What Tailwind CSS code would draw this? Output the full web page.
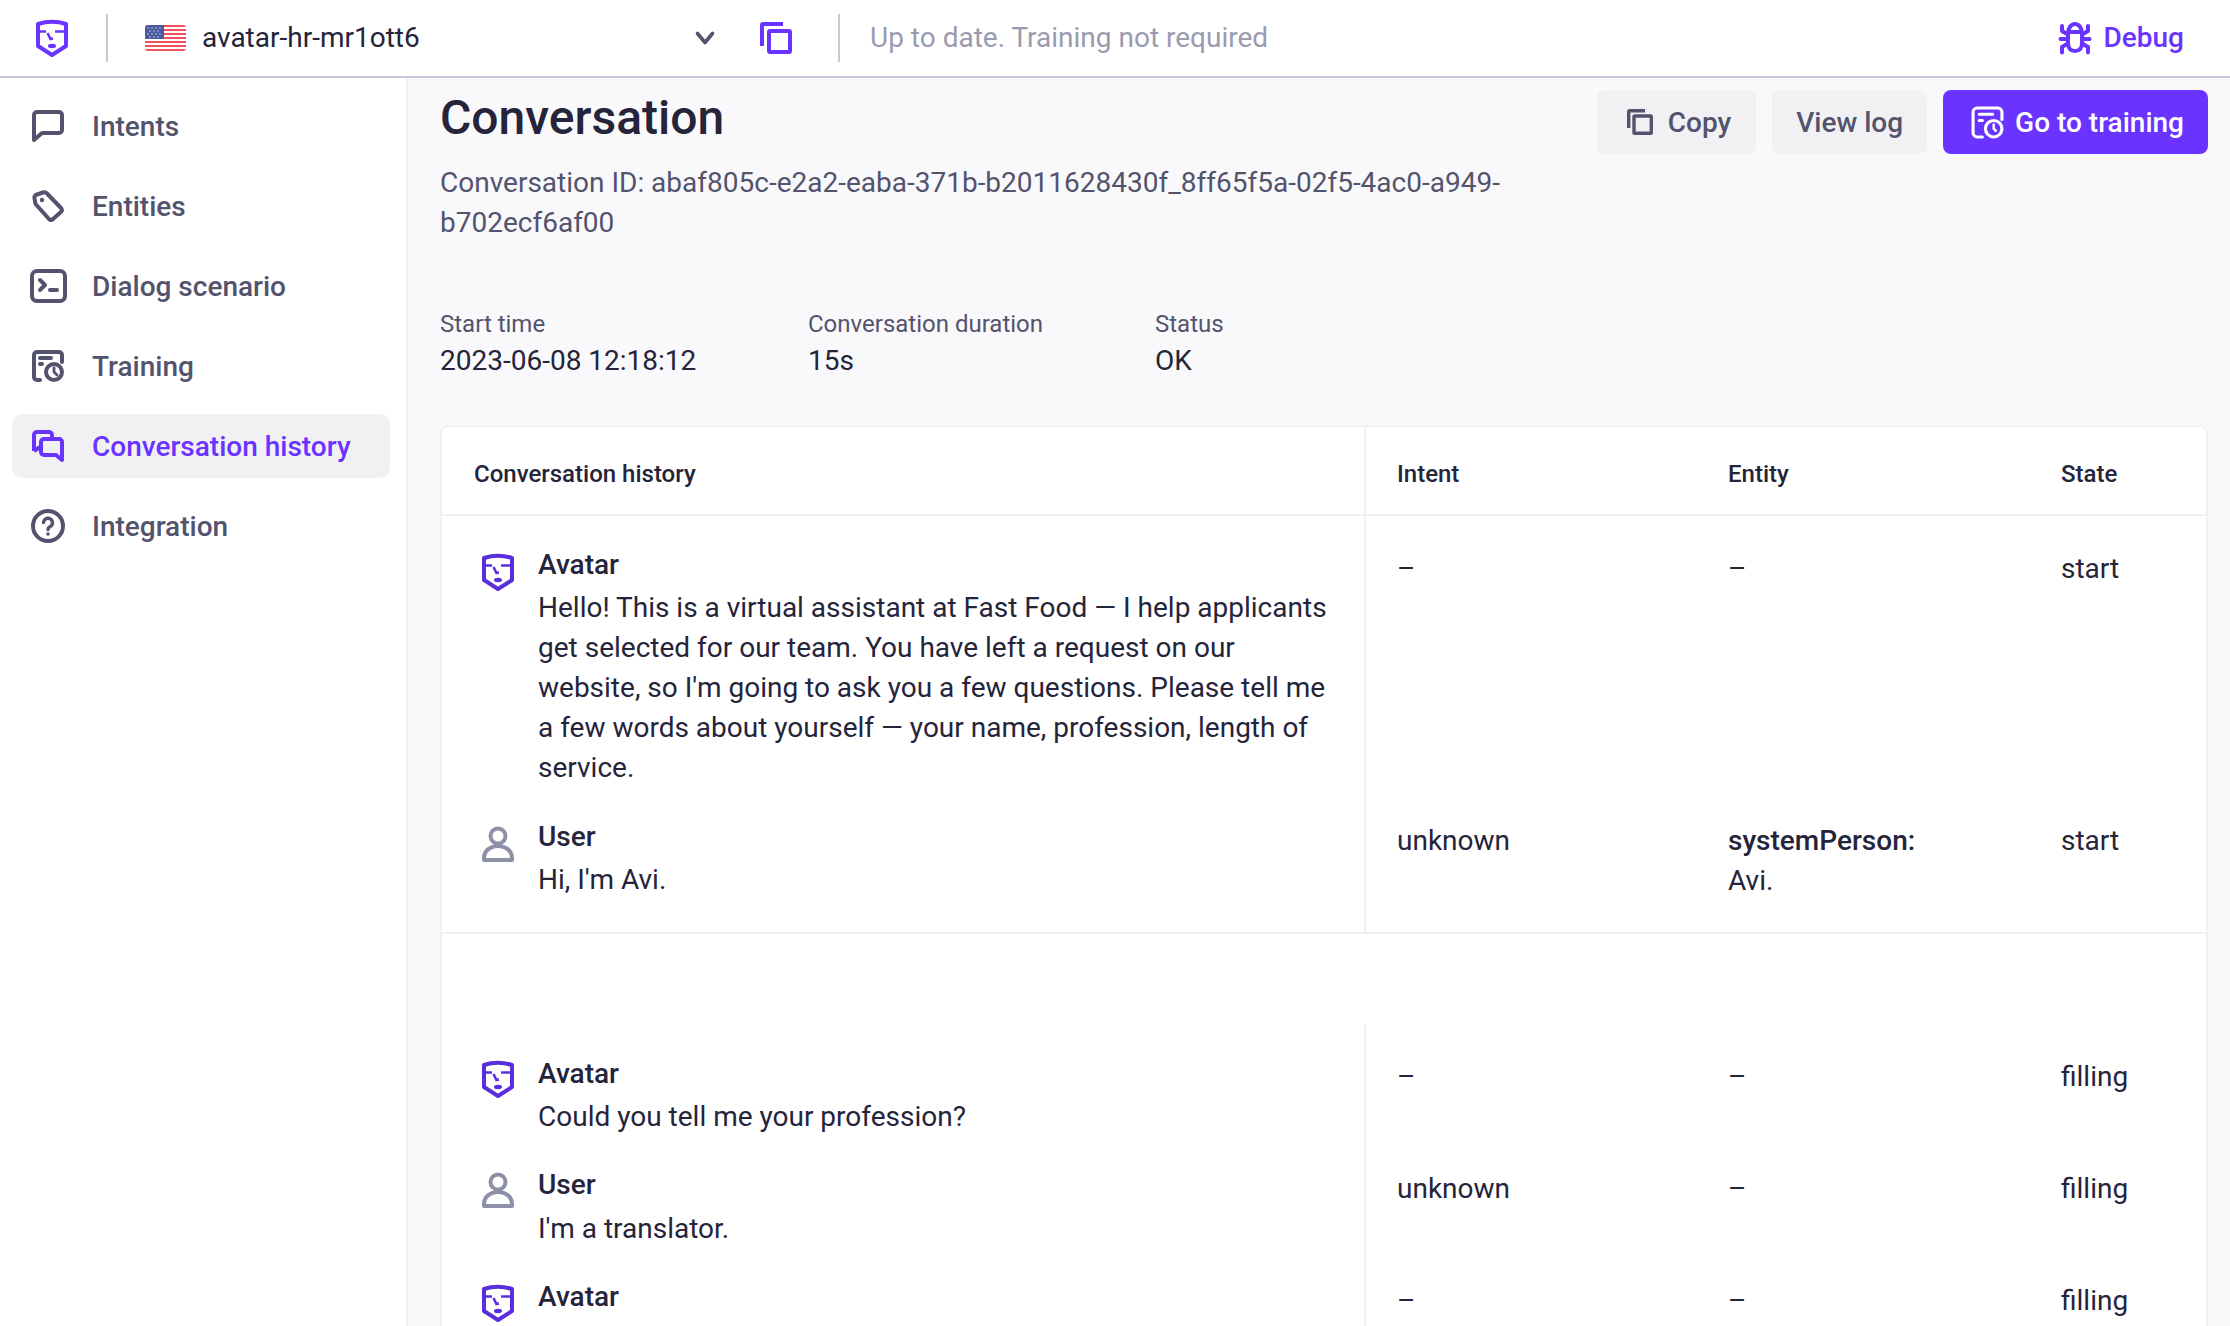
<!DOCTYPE html>
<html lang="en">
<head>
<meta charset="utf-8">
<title>Conversation</title>
<script src="https://cdn.jsdelivr.net/npm/@tailwindcss/browser@4"></script>
</head>
<body class="font-['Roboto',sans-serif] text-[28px] leading-[40px] text-[#25243a] bg-white">
<div class="w-[2230px] h-[1326px] overflow-hidden flex flex-col">
  <header class="h-[78px] shrink-0 flex items-center bg-white border-b-2 border-[#c5c9dc]">
    <div class="w-[106px] shrink-0 flex justify-center pr-[2px]">
      <svg class="w-[32px] h-[38px]" viewBox="0 0 32 38" fill="none" stroke="#6a33ff" stroke-width="4"><path d="M2 5Q16 0.500 30 5V27L16 36L2 27Z" stroke-linejoin="round"/><path d="M19 12.500H30M2 12.500H10M11.500 14L14.500 20L17 19.500" stroke-width="2.600"/><ellipse cx="16" cy="27" rx="4" ry="2.200" fill="#6a33ff" stroke="none"/></svg>
    </div>
    <div class="w-[2px] h-[48px] bg-[#c5c9dc]"></div>
    <div class="w-[635px] shrink-0 flex items-center pl-[37px] pr-[26px]">
      <svg class="w-[41px] h-[26px] rounded-[3px] shrink-0" viewBox="0 0 41 26"><rect width="41" height="26" fill="#fff"/><path d="M0 1h41M0 5h41M0 9h41M0 13h41M0 17h41M0 21h41M0 25h41" stroke="#f0525f" stroke-width="2"/><rect width="19" height="14" fill="#4a5a9c"/><g fill="#c9cfe6"><circle cx="3" cy="3" r=".8"/><circle cx="7" cy="3" r=".8"/><circle cx="11" cy="3" r=".8"/><circle cx="15" cy="3" r=".8"/><circle cx="5" cy="6" r=".8"/><circle cx="9" cy="6" r=".8"/><circle cx="13" cy="6" r=".8"/><circle cx="3" cy="9" r=".8"/><circle cx="7" cy="9" r=".8"/><circle cx="11" cy="9" r=".8"/><circle cx="15" cy="9" r=".8"/><circle cx="5" cy="12" r=".8"/><circle cx="9" cy="12" r=".8"/><circle cx="13" cy="12" r=".8"/></g></svg>
      <span class="ml-[16px] flex-1">avatar-hr-mr1ott6</span>
      <svg class="w-[24px] h-[24px]" viewBox="0 0 24 24" fill="none" stroke="#53536d" stroke-width="3.600" stroke-linecap="round" stroke-linejoin="round"><path d="M4.500 7.500L12 16.500L19.500 7.500"/></svg>
    </div>
    <svg class="w-[32px] h-[32px] shrink-0 ml-[17px]" viewBox="0 0 32 32" fill="none" stroke="#6a33ff" stroke-width="4" stroke-linejoin="round"><path d="M2 24V3A1 1 0 0 1 3 2H23"/><rect x="9" y="9" width="21" height="21" rx="1"/></svg>
    <div class="w-[2px] h-[48px] bg-[#c5c9dc] ml-[46px]"></div>
    <span class="ml-[30px] text-[#9a9bb0] flex-1">Up to date. Training not required</span>
    <div class="flex items-center gap-[12px] pr-[46px] text-[#6a33ff] font-medium">
      <svg class="w-[34px] h-[34px]" viewBox="0 0 34 34" fill="none" stroke="#6a33ff" stroke-width="4" stroke-linecap="round" stroke-linejoin="round"><path d="M10 13C10 7 13 3 17 3S24 7 24 13V22C24 27 21.500 30 17 30S10 27 10 22Z"/><path d="M11 11H23" /><path d="M9 13L4 10V5M25 13L30 10V5M9 18H2.500M25 18H31.500M9 23L4 26V31.500M25 23L30 26V31.500"/></svg>
      <span>Debug</span>
    </div>
  </header>

  <div class="flex flex-1 min-h-0">
    <nav class="w-[408px] shrink-0 bg-white border-r-2 border-[#f1f1f4] pl-[12px] pr-[16px] pt-[16px] flex flex-col gap-[16px] text-[#53536d] font-medium">
      <a class="h-[64px] flex items-center gap-[28px] pl-[20px] rounded-[10px]">
        <svg class="w-[32px] h-[32px] shrink-0" viewBox="0 0 32 32" fill="none" stroke="currentColor" stroke-width="4" stroke-linejoin="round"><path d="M5 2H27A3 3 0 0 1 30 5V20A3 3 0 0 1 27 23H10L2 30V5A3 3 0 0 1 5 2Z"/></svg>
        <span class="pt-[2px]">Intents</span>
      </a>
      <a class="h-[64px] flex items-center gap-[28px] pl-[20px] rounded-[10px]">
        <svg class="w-[32px] h-[32px] shrink-0" viewBox="0 0 32 32" fill="none" stroke="currentColor" stroke-width="4" stroke-linejoin="round"><path d="M2.500 8.500Q2 5.500 5 4.500L11 2.500Q13.500 1.700 15 3.500L29 18Q30.500 20 29.500 21.500L21 29Q19 31 17 29L3.500 14Z"/><circle cx="10" cy="10" r="2.200" fill="currentColor" stroke="none"/></svg>
        <span class="pt-[2px]">Entities</span>
      </a>
      <a class="h-[64px] flex items-center gap-[28px] pl-[20px] rounded-[10px]">
        <svg class="w-[32px] h-[32px] shrink-0 overflow-visible" viewBox="0 0 32 32" fill="none" stroke="currentColor" stroke-width="4" stroke-linecap="round" stroke-linejoin="round"><rect x="0" y="1" width="33" height="30" rx="5"/><path d="M8 10L13 15L8 20M18 20H25"/></svg>
        <span class="pt-[2px]">Dialog scenario</span>
      </a>
      <a class="h-[64px] flex items-center gap-[28px] pl-[20px] rounded-[10px]">
        <svg class="w-[32px] h-[32px] shrink-0" viewBox="0 0 32 32" fill="none" stroke="currentColor" stroke-width="4" stroke-linecap="round" stroke-linejoin="round"><path d="M30 12V5A3 3 0 0 0 27 2H5A3 3 0 0 0 2 5V27A3 3 0 0 0 5 30H8"/><path d="M8 8H19M8 14H10"/><circle cx="22" cy="22" r="8"/><path d="M22 18V22L25 25" stroke-width="2.800"/></svg>
        <span class="pt-[2px]">Training</span>
      </a>
      <a class="h-[64px] flex items-center gap-[28px] pl-[20px] rounded-[10px] bg-[#f1f1f4] text-[#6a33ff]">
        <svg class="w-[32px] h-[32px] shrink-0" viewBox="0 0 32 32" fill="none" stroke="currentColor" stroke-width="4" stroke-linejoin="round"><path d="M2 21V5A3 3 0 0 1 5 2H17A3 3 0 0 1 20 5V9"/><path d="M2 21L8 17"/><path d="M12 9H27A3 3 0 0 1 30 12V30L24 25H12A3 3 0 0 1 9 22V12A3 3 0 0 1 12 9Z"/></svg>
        <span class="pt-[2px]">Conversation history</span>
      </a>
      <a class="h-[64px] flex items-center gap-[28px] pl-[20px] rounded-[10px]">
        <svg class="w-[32px] h-[32px] shrink-0 overflow-visible" viewBox="0 0 32 32" fill="none" stroke="currentColor" stroke-width="4" stroke-linecap="round"><circle cx="16" cy="16" r="15"/><path d="M11.500 12.500A4.500 4.500 0 1 1 17.500 17C16.500 17.500 16 18 16 19.500" stroke-width="3.400"/><circle cx="16" cy="24" r="1.800" fill="currentColor" stroke="none"/></svg>
        <span class="pt-[2px]">Integration</span>
      </a>
    </nav>

    <main class="flex-1 min-w-0 bg-[#f9f9fb] pl-[32px] pr-[22px] overflow-hidden">
      <div class="flex justify-between items-start pt-[12px]">
        <div class="w-[1080px]">
          <h1 class="text-[48px] leading-[56px] font-medium">Conversation</h1>
          <p class="mt-[17px] text-[#53536d]">Conversation ID: abaf805c-e2a2-eaba-371b-b2011628430f_8ff65f5a-02f5-4ac0-a949-b702ecf6af00</p>
        </div>
        <div class="flex gap-[16px] font-medium text-[#53536d]">
          <button class="h-[64px] pl-[30px] pr-[25px] flex items-center gap-[15px] rounded-[8px] bg-[#f1f1f4]">
            <svg class="w-[26px] h-[26px]" viewBox="0 0 26 26" fill="none" stroke="currentColor" stroke-width="3.400" stroke-linejoin="round"><path d="M1.700 19V2.500A.8 .8 0 0 1 2.500 1.700H18"/><rect x="7" y="7" width="17.300" height="17.300" rx=".8"/></svg>
            <span class="pt-[1px]">Copy</span>
          </button>
          <button class="h-[64px] px-[24px] pt-[1px] flex items-center rounded-[8px] bg-[#f1f1f4]">View log</button>
          <button class="h-[64px] pl-[28px] pr-[24px] flex items-center gap-[11px] rounded-[8px] bg-[#6a33ff] text-white">
            <svg class="w-[33px] h-[33px]" viewBox="0 0 32 32" fill="none" stroke="currentColor" stroke-width="3" stroke-linecap="round" stroke-linejoin="round"><path d="M30 13V6A4 4 0 0 0 26 2H6A4 4 0 0 0 2 6V26A4 4 0 0 0 6 30H11"/><path d="M8 8H21M8 14H11"/><circle cx="22" cy="22" r="8"/><path d="M22 18V22L24 24" stroke-width="2.400"/></svg>
            <span class="pt-[1px]">Go to training</span>
          </button>
        </div>
      </div>

      <div class="flex mt-[65px]">
        <div class="w-[368px]"><div class="text-[24px] leading-[33px] text-[#53536d]">Start time</div><div>2023-06-08 12:18:12</div></div>
        <div class="w-[347px]"><div class="text-[24px] leading-[33px] text-[#53536d]">Conversation duration</div><div>15s</div></div>
        <div><div class="text-[24px] leading-[33px] text-[#53536d]">Status</div><div>OK</div></div>
      </div>

      <div class="mt-[44px] bg-white border-2 border-[#f1f1f4] rounded-[8px] h-[1000px] overflow-hidden">
        <div class="grid grid-cols-[924px_330px_333px_1fr] border-b-2 border-[#f1f1f4] text-[24px] font-medium h-[89px] items-stretch">
          <div class="pl-[32px] pt-[6px] border-r-2 border-[#f1f1f4] flex items-center">Conversation history</div>
          <div class="pl-[31px] pt-[6px] flex items-center">Intent</div>
          <div class="pl-[32px] pt-[6px] flex items-center">Entity</div>
          <div class="pl-[32px] pt-[6px] flex items-center">State</div>
        </div>

        <div class="grid grid-cols-[924px_330px_333px_1fr]">
          <div class="border-r-2 border-[#f1f1f4] flex gap-[24px] pl-[40px] pr-[31px] pt-[29px]">
            <svg class="w-[32px] h-[38px] shrink-0 mt-[8px]" viewBox="0 0 32 38" fill="none" stroke="#5a2fdb" stroke-width="4"><path d="M2 5Q16 0.500 30 5V27L16 36L2 27Z" stroke-linejoin="round"/><path d="M19 12.500H30M2 12.500H10M11.500 14L14.500 20L17 19.500" stroke-width="2.600"/><ellipse cx="16" cy="27" rx="4" ry="2.200" fill="#5a2fdb" stroke="none"/></svg>
            <div><div class="font-medium mb-[3px]">Avatar</div><div>Hello! This is a virtual assistant at Fast Food — I help applicants get selected for our team. You have left a request on our website, so I'm going to ask you a few questions. Please tell me a few words about yourself — your name, profession, length of service.</div></div>
          </div>
          <div class="pl-[31px] pt-[33px]">–</div>
          <div class="pl-[32px] pt-[33px]">–</div>
          <div class="pl-[32px] pt-[33px]">start</div>
        </div>

        <div class="grid grid-cols-[924px_330px_333px_1fr] border-b-2 border-[#f1f1f4]">
          <div class="border-r-2 border-[#f1f1f4] flex gap-[24px] pl-[40px] pr-[31px] pt-[29px] pb-[32px]">
            <svg class="w-[32px] h-[36px] shrink-0 mt-[9px]" viewBox="0 0 32 36" fill="none" stroke="#8e90a8" stroke-width="4"><circle cx="16" cy="10" r="7.500"/><path d="M2 32C2 25 8 20 16 20S30 25 30 32V34H2Z" stroke-linejoin="round"/></svg>
            <div><div class="font-medium mb-[3px]">User</div><div>Hi, I'm Avi.</div></div>
          </div>
          <div class="pl-[31px] pt-[33px]">unknown</div>
          <div class="pl-[32px] pt-[33px]"><span class="font-medium">systemPerson:</span><br>Avi.</div>
          <div class="pl-[32px] pt-[33px]">start</div>
        </div>

        <div class="h-[90px]"></div>

        <div class="grid grid-cols-[924px_330px_333px_1fr]">
          <div class="border-r-2 border-[#f1f1f4] flex gap-[24px] pl-[40px] pr-[31px] pt-[30px]">
            <svg class="w-[32px] h-[38px] shrink-0 mt-[6px]" viewBox="0 0 32 38" fill="none" stroke="#5a2fdb" stroke-width="4"><path d="M2 5Q16 0.500 30 5V27L16 36L2 27Z" stroke-linejoin="round"/><path d="M19 12.500H30M2 12.500H10M11.500 14L14.500 20L17 19.500" stroke-width="2.600"/><ellipse cx="16" cy="27" rx="4" ry="2.200" fill="#5a2fdb" stroke="none"/></svg>
            <div><div class="font-medium mb-[3px]">Avatar</div><div>Could you tell me your profession?</div></div>
          </div>
          <div class="pl-[31px] pt-[33px]">–</div>
          <div class="pl-[32px] pt-[33px]">–</div>
          <div class="pl-[32px] pt-[33px]">filling</div>
        </div>

        <div class="grid grid-cols-[924px_330px_333px_1fr]">
          <div class="border-r-2 border-[#f1f1f4] flex gap-[24px] pl-[40px] pr-[31px] pt-[28px]">
            <svg class="w-[32px] h-[36px] shrink-0 mt-[7px]" viewBox="0 0 32 36" fill="none" stroke="#8e90a8" stroke-width="4"><circle cx="16" cy="10" r="7.500"/><path d="M2 32C2 25 8 20 16 20S30 25 30 32V34H2Z" stroke-linejoin="round"/></svg>
            <div><div class="font-medium mb-[4px]">User</div><div>I'm a translator.</div></div>
          </div>
          <div class="pl-[31px] pt-[32px]">unknown</div>
          <div class="pl-[32px] pt-[32px]">–</div>
          <div class="pl-[32px] pt-[32px]">filling</div>
        </div>

        <div class="grid grid-cols-[924px_330px_333px_1fr] h-[140px]">
          <div class="border-r-2 border-[#f1f1f4] flex gap-[24px] pl-[40px] pr-[31px] pt-[28px]">
            <svg class="w-[32px] h-[38px] shrink-0 mt-[7px]" viewBox="0 0 32 38" fill="none" stroke="#5a2fdb" stroke-width="4"><path d="M2 5Q16 0.500 30 5V27L16 36L2 27Z" stroke-linejoin="round"/><path d="M19 12.500H30M2 12.500H10M11.500 14L14.500 20L17 19.500" stroke-width="2.600"/><ellipse cx="16" cy="27" rx="4" ry="2.200" fill="#5a2fdb" stroke="none"/></svg>
            <div><div class="font-medium">Avatar</div></div>
          </div>
          <div class="pl-[31px] pt-[32px]">–</div>
          <div class="pl-[32px] pt-[32px]">–</div>
          <div class="pl-[32px] pt-[32px]">filling</div>
        </div>
      </div>
    </main>
  </div>
</div>
</body>
</html>
